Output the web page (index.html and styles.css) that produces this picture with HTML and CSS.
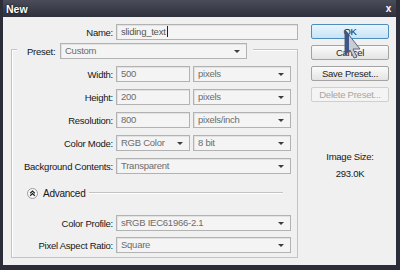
FILE: index.html
```html
<!DOCTYPE html>
<html lang="en">
<head>
  <meta charset="UTF-8">
  <title>New</title>
  <link rel="stylesheet" href="styles.css">
</head>
<body>

  <div class="dialog">
    <div class="titlebar">
      <span class="title">New</span>
      <span class="close">x</span>
    </div>

    <div class="body">
      <div class="form">
        <div class="row name-row">
          <label class="lbl">Name:</label>
          <div class="field name">sliding_text<span class="caret"></span></div>
        </div>

        <div class="group">
          <div class="preset-row">
            <label class="plabel">Preset:</label>
            <div class="field select preset">Custom</div>
          </div>

          <div class="row">
            <label class="lbl">Width:</label>
            <div class="field small">500</div>
            <div class="field select unit">pixels</div>
          </div>
          <div class="row">
            <label class="lbl">Height:</label>
            <div class="field small">200</div>
            <div class="field select unit">pixels</div>
          </div>
          <div class="row">
            <label class="lbl">Resolution:</label>
            <div class="field small">800</div>
            <div class="field select unit">pixels/inch</div>
          </div>
          <div class="row">
            <label class="lbl">Color Mode:</label>
            <div class="field select small">RGB Color</div>
            <div class="field select unit">8 bit</div>
          </div>
          <div class="row">
            <label class="lbl">Background Contents:</label>
            <div class="field select wide">Transparent</div>
          </div>

          <div class="advanced">
            <svg class="adv-icon" width="11" height="11" viewBox="0 0 11 11">
              <circle cx="5.5" cy="5.5" r="5" fill="#f8f8f8" stroke="#9a9a9a"/>
              <path d="M3.2 5.2 L5.5 3 L7.8 5.2 M3.2 7.8 L5.5 5.6 L7.8 7.8" fill="none" stroke="#222" stroke-width="1.2"/>
            </svg>
            <span class="adv-text">Advanced</span>
            <span class="adv-line"></span>
          </div>

          <div class="row profile">
            <label class="lbl">Color Profile:</label>
            <div class="field select wide">sRGB IEC61966-2.1</div>
          </div>
          <div class="row pixel">
            <label class="lbl">Pixel Aspect Ratio:</label>
            <div class="field select wide">Square</div>
          </div>
        </div>
      </div>

      <div class="side">
        <div class="btn ok">OK</div>
        <div class="btn">Cancel</div>
        <div class="btn">Save Preset...</div>
        <div class="btn disabled">Delete Preset...</div>

        <div class="image-size">
          <div>Image Size:</div>
          <div>293.0K</div>
        </div>

        <svg class="pointer" width="22" height="32" viewBox="0 0 22 32">
          <path d="M2 2 L2 27 L7 22 L11 30 L14 29 L10 21 L17 21 Z" fill="#c9ccd4" stroke="#5b6478" stroke-width="1"/>
          <path d="M2 2 L2 27 L6 23 L6 6 Z" fill="#3e5788"/>
        </svg>
      </div>
    </div>
  </div>

</body>
</html>
```

FILE: styles.css
```css
body { margin: 0; background: #2b2d39; font-family: "Liberation Sans", Arial, sans-serif; font-size: 9.5px; letter-spacing: -0.25px; color: #161616; }

.dialog { width: 400px; height: 270px; box-sizing: border-box; padding: 0 4px 5px 3px; background: #2b2d39; }

.titlebar { height: 17px; display: flex; justify-content: space-between; align-items: center; padding: 0 5px 0 3px; background: linear-gradient(#4a4c5a, #2e303c); }
.title { color: #fff; font-weight: bold; font-size: 10.5px; letter-spacing: 0; text-shadow: 0 0 2px #000; }
.close { color: #fff; font-weight: bold; font-size: 10px; }

.body { height: 248px; display: flex; background: #f0f0f0; }
.form { width: 305px; }

.row { display: flex; align-items: center; height: 16px; margin-top: 7px; }
.lbl { width: 101px; margin-right: 3px; text-align: right; }
.name-row .lbl { width: 110px; }

.field { position: relative; height: 16px; box-sizing: border-box; padding-left: 4px; line-height: 14px; color: #6c6c6c; background: #f4f4f4; border: 1px solid #b2b2b2; box-shadow: inset 1px 1px 0 #e2e2e2; white-space: nowrap; }
.field.select::after { content: ""; position: absolute; right: 6px; top: 6px; border-left: 3px solid transparent; border-right: 3px solid transparent; border-top: 3px solid #3c3c3c; }
.name { width: 182px; color: #555; }
.caret { display: inline-block; width: 1px; height: 11px; margin-left: 1px; vertical-align: -2px; background: #222; }
.small { width: 74px; margin-right: 3px; }
.unit { width: 98px; }
.wide { width: 175px; }

.group { margin: 9px 0 0 8px; width: 287px; height: 209px; box-sizing: border-box; border: 1px solid #c3c3c3; box-shadow: inset 1px 1px 0 #fff; }
.preset-row { display: flex; align-items: center; width: fit-content; height: 16px; margin: -7px 0 0 5px; padding: 0 6px 0 10px; background: #f0f0f0; }
.plabel { width: 28px; margin-right: 5px; }
.preset { width: 187px; }

.advanced { display: flex; align-items: center; height: 12px; margin-top: 13px; padding: 0 14px 0 15px; }
.adv-text { margin: 0 4px 0 5px; font-size: 10px; }
.adv-line { flex: 1; height: 1px; background: #c3c3c3; border-bottom: 1px solid #fff; }

.row.profile { margin-top: 16px; }
.row.pixel { margin-top: 6px; }

.side { position: relative; flex: 1; padding: 7px 0 0 3px; }
.btn { width: 78px; height: 15px; box-sizing: border-box; margin-bottom: 6px; text-align: center; line-height: 13px; border: 1px solid #a3a3a3; border-radius: 2px; background: linear-gradient(#fbfbfb, #e3e3e3); color: #1e1e1e; }
.btn.ok { border-color: #4f8dbd; background: linear-gradient(#e9f5fc, #c6e4f7); }
.btn.disabled { color: #a6a6a6; border-color: #cfcfcf; background: #f4f4f4; }

.image-size { margin-top: 46px; width: 78px; text-align: center; line-height: 17px; }

.pointer { position: absolute; left: 35px; top: 11px; }
```
